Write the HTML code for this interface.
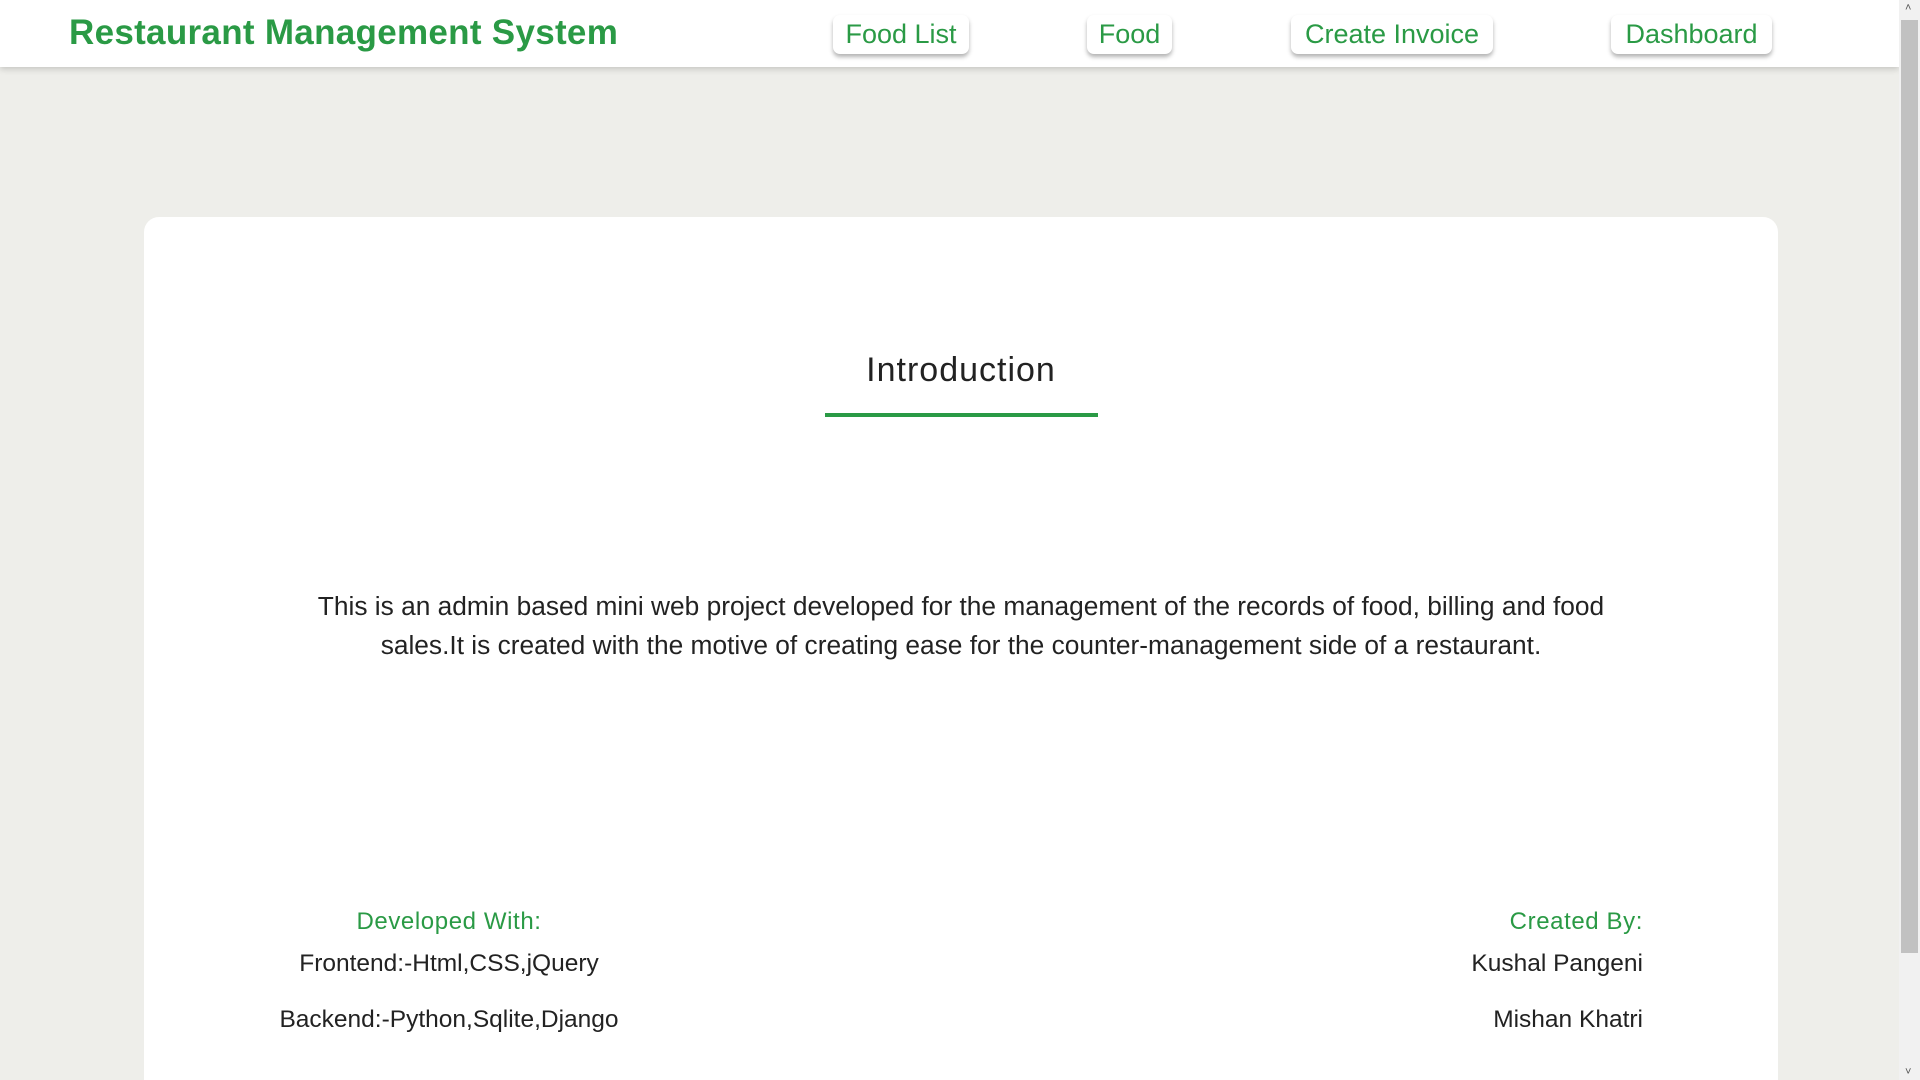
<!DOCTYPE html>
<html style="height:1080px;overflow:hidden"><head><meta charset="utf-8"><style>
body{margin:0;width:1920px;height:1080px;overflow:hidden;background:#eeeeea;font-family:"Liberation Sans",sans-serif;position:relative}
.hdr{position:absolute;left:0;top:0;width:1899px;height:67px;background:#fff;box-shadow:0 2px 6px rgba(0,0,0,.18)}
.logo{position:absolute;left:69px;top:13px;font-size:35px;letter-spacing:0.3px;font-weight:bold;color:#2a9a45;white-space:nowrap}
.nav{position:absolute;top:15px;height:39px;background:#fff;border-radius:7px;box-shadow:0 3px 4px rgba(0,0,0,.3);color:#2a9a45;font-size:27px;line-height:39px;text-align:center;white-space:nowrap}
.sb{position:absolute;right:0;top:0;width:21px;height:1080px;background:#f1f1f1}
.thumb{position:absolute;right:2px;top:20px;width:17px;height:933px;background:#c1c1c1}
.card{position:absolute;left:144px;top:217px;width:1634px;height:863px;background:#fff;border-radius:15px 15px 0 0}
.t{position:absolute;left:0;width:1634px;text-align:center}
</style></head><body>
<div class="hdr">
<div class="logo">Restaurant Management System</div>
<div class="nav" style="left:833px;width:136px">Food List</div>
<div class="nav" style="left:1087px;width:85px">Food</div>
<div class="nav" style="left:1291px;width:202px">Create Invoice</div>
<div class="nav" style="left:1611px;width:161px">Dashboard</div>
</div>
<div class="sb"><div class="thumb"></div>
<div style="position:absolute;top:2px;left:6px;font-size:11px;color:#555">˄</div>
<div style="position:absolute;bottom:2px;left:6px;font-size:11px;color:#555">˅</div></div>
<div class="card">
<div class="t" style="top:134px;font-size:34px;letter-spacing:1px;color:#222">Introduction</div>
<div style="position:absolute;left:681px;top:196px;width:273px;height:4px;background:#2a9a45"></div>
<div class="t" style="top:370px;font-size:26.3px;line-height:39px;color:#222">This is an admin based mini web project developed for the management of the records of food, billing and food<br>sales.It is created with the motive of creating ease for the counter-management side of a restaurant.</div>
<div style="position:absolute;left:105px;width:400px;text-align:center;top:691px;font-size:24px;letter-spacing:0.6px;color:#2a9a45">Developed With:</div>
<div style="position:absolute;left:105px;width:400px;text-align:center;top:733px;font-size:24.5px;color:#222">Frontend:-Html,CSS,jQuery</div>
<div style="position:absolute;left:105px;width:400px;text-align:center;top:789px;font-size:24.5px;color:#222">Backend:-Python,Sqlite,Django</div>
<div style="position:absolute;right:135px;text-align:right;top:691px;font-size:24px;letter-spacing:0.6px;color:#2a9a45">Created By:</div>
<div style="position:absolute;right:135px;text-align:right;top:733px;font-size:24.5px;color:#222">Kushal Pangeni</div>
<div style="position:absolute;right:135px;text-align:right;top:789px;font-size:24.5px;color:#222">Mishan Khatri</div>
</div>
</body></html>
